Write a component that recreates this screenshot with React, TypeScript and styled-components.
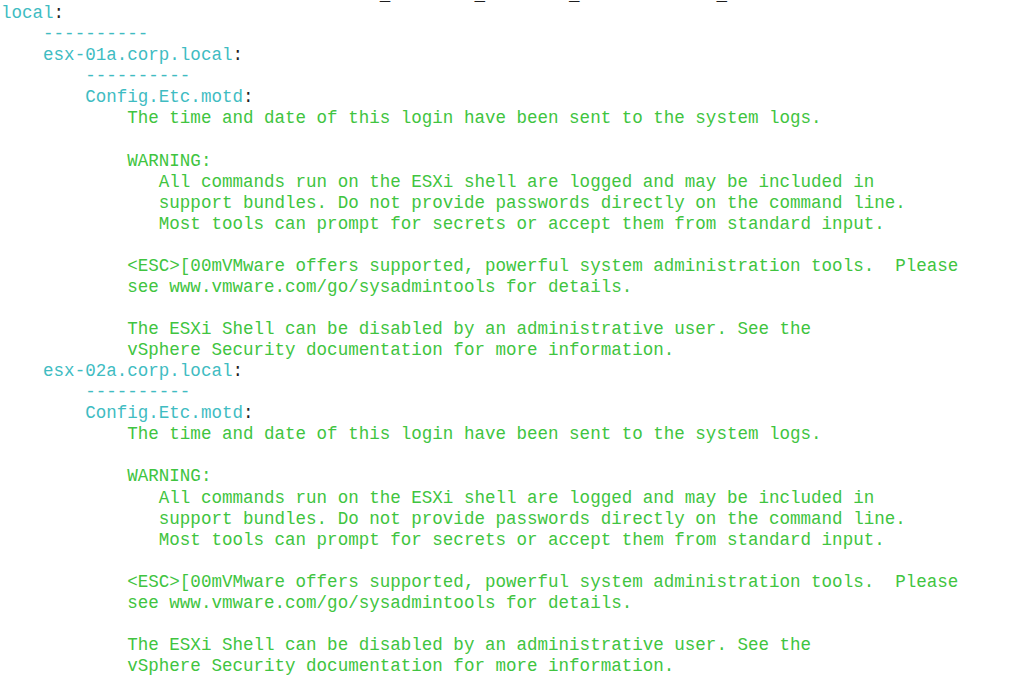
import React from "react";
import styled, { createGlobalStyle } from "styled-components";

const Global = createGlobalStyle`
  html, body { margin: 0; padding: 0; background: #ffffff; }
  body { overflow: hidden; }
`;

const Screen = styled.div`
  width: 1024px;
  height: 677px;
  overflow: hidden;
  background: #ffffff;
`;

const Output = styled.div`
  margin-top: -18px;
  padding-left: 1px;
  font-family: "Liberation Mono", "Courier New", monospace;
  font-size: 17.54px;
  line-height: 21.07px;
  letter-spacing: 0;
`;

const Line = styled.div<{ $indent: number }>`
  white-space: pre;
  height: 21.07px;
  padding-left: ${(p) => p.$indent}ch;
`;

const TopRule = styled.div`
  white-space: pre;
  height: 21.07px;
  line-height: 27px;
  color: #1e1e1e;
`;

const Key = styled.span`
  color: #3fbcc2;
`;

const Colon = styled.span`
  color: #1e1e1e;
`;

const Msg = styled.span`
  color: #40c440;
`;

type Row =
  | { kind: "key"; text: string; indent: number }
  | { kind: "dash"; indent: number }
  | { kind: "msg"; text: string; indent: number }
  | { kind: "blank" };

const hostBlock = (host: string): Row[] => [
  { kind: "key", text: host, indent: 4 },
  { kind: "dash", indent: 8 },
  { kind: "key", text: "Config.Etc.motd", indent: 8 },
  { kind: "msg", text: "The time and date of this login have been sent to the system logs.", indent: 12 },
  { kind: "blank" },
  { kind: "msg", text: "WARNING:", indent: 12 },
  { kind: "msg", text: "All commands run on the ESXi shell are logged and may be included in", indent: 15 },
  { kind: "msg", text: "support bundles. Do not provide passwords directly on the command line.", indent: 15 },
  { kind: "msg", text: "Most tools can prompt for secrets or accept them from standard input.", indent: 15 },
  { kind: "blank" },
  { kind: "msg", text: "<ESC>[00mVMware offers supported, powerful system administration tools.  Please", indent: 12 },
  { kind: "msg", text: "see www.vmware.com/go/sysadmintools for details.", indent: 12 },
  { kind: "blank" },
  { kind: "msg", text: "The ESXi Shell can be disabled by an administrative user. See the", indent: 12 },
  { kind: "msg", text: "vSphere Security documentation for more information.", indent: 12 },
];

const rows: Row[] = [
  { kind: "key", text: "local", indent: 0 },
  { kind: "dash", indent: 4 },
  ...hostBlock("esx-01a.corp.local"),
  ...hostBlock("esx-02a.corp.local"),
];

const topRule =
  "                                    _        _        _             _";

export default function App() {
  return (
    <Screen>
      <Global />
      <Output>
        <TopRule>{topRule}</TopRule>
        {rows.map((r, i) => {
          if (r.kind === "blank") return <Line key={i} $indent={0}>{" "}</Line>;
          if (r.kind === "dash")
            return (
              <Line key={i} $indent={r.indent}>
                <Key>----------</Key>
              </Line>
            );
          if (r.kind === "key")
            return (
              <Line key={i} $indent={r.indent}>
                <Key>{r.text}</Key>
                <Colon>:</Colon>
              </Line>
            );
          return (
            <Line key={i} $indent={r.indent}>
              <Msg>{r.text}</Msg>
            </Line>
          );
        })}
      </Output>
    </Screen>
  );
}
